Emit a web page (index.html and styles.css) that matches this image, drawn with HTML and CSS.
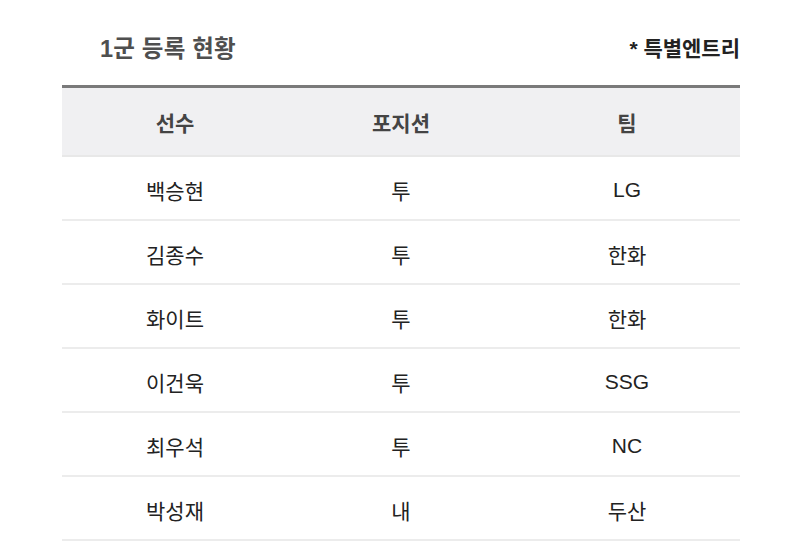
FILE: index.html
```html
<!DOCTYPE html>
<html lang="ko">
<head>
<meta charset="utf-8">
<link rel="stylesheet" href="styles.css">
</head>
<body>
<div class="wrap">
  <div class="top">
    <h2 class="title">1군 등록 현황</h2>
    <span class="note">* 특별엔트리</span>
  </div>
  <table class="tbl">
    <thead>
      <tr><th>선수</th><th>포지션</th><th>팀</th></tr>
    </thead>
    <tbody>
      <tr><td>백승현</td><td>투</td><td>LG</td></tr>
      <tr><td>김종수</td><td>투</td><td>한화</td></tr>
      <tr><td>화이트</td><td>투</td><td>한화</td></tr>
      <tr><td>이건욱</td><td>투</td><td>SSG</td></tr>
      <tr><td>최우석</td><td>투</td><td>NC</td></tr>
      <tr><td>박성재</td><td>내</td><td>두산</td></tr>
    </tbody>
  </table>
</div>
</body>
</html>
```
FILE: styles.css
```css
html, body {
  margin: 0;
  padding: 0;
  background: #fff;
}
body {
  font-family: "Liberation Sans", "Noto Sans CJK KR", sans-serif;
  color: #222;
}
.wrap {
  width: 678px;
  margin-left: 62px;
}
.top {
  height: 85px;
  display: flex;
  align-items: center;
  justify-content: space-between;
  padding: 8px 0 0 38px;
  box-sizing: border-box;
}
.title {
  margin: 0;
  font-size: 23.5px;
  font-weight: 700;
  color: #4f4f4f;
  letter-spacing: 0.2px;
}
.note {
  font-size: 21px;
  font-weight: 700;
  color: #222;
}
.tbl {
  width: 100%;
  border-collapse: collapse;
  table-layout: fixed;
  border-top: 3px solid #7a7a7a;
}
.tbl th {
  background: #f0f0f2;
  height: 67px;
  font-size: 21px;
  font-weight: 700;
  color: #444;
  text-align: center;
  padding: 0;
  border-bottom: 2px solid #e8e8e8;
}
.tbl td {
  height: 59px;
  font-size: 21px;
  text-align: center;
  padding: 3px 0 0 0;
  color: #222;
  border-bottom: 2px solid #ececec;
}
```
